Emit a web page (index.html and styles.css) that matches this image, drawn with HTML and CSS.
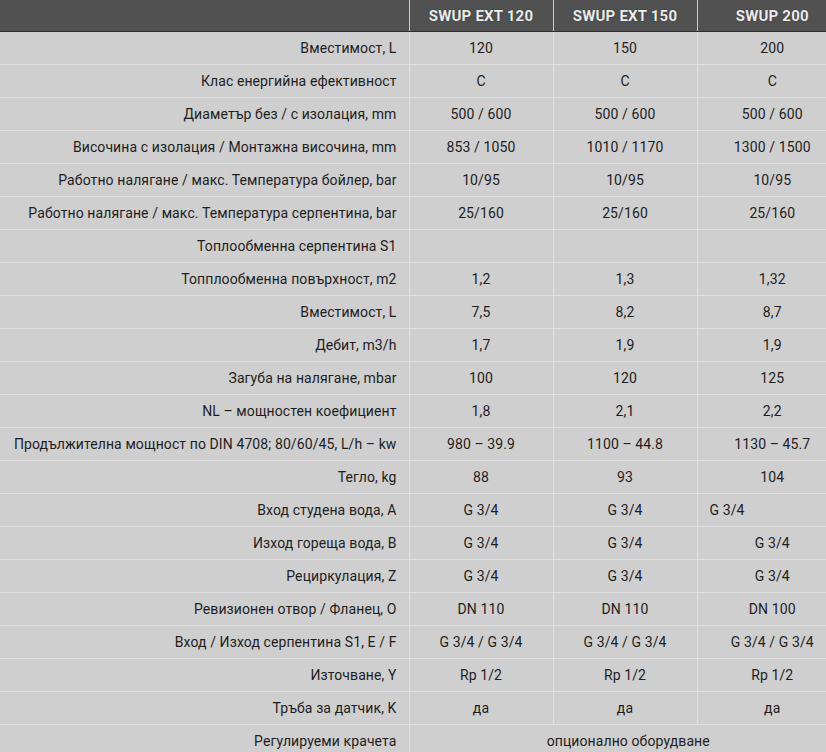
FILE: index.html
```html
<!DOCTYPE html>
<html lang="bg">
<head>
<meta charset="utf-8">
<title>SWUP</title>
<link rel="stylesheet" href="styles.css">
</head>
<body>
<table class="spec">
  <colgroup>
    <col class="c-label"><col class="c-val"><col class="c-val"><col class="c-last">
  </colgroup>
  <thead>
    <tr><th></th><th>SWUP EXT 120</th><th>SWUP EXT 150</th><th>SWUP 200</th></tr>
  </thead>
  <tbody>
    <tr><td>Вместимост, L</td><td>120</td><td>150</td><td>200</td></tr>
    <tr><td>Клас енергийна ефективност</td><td>C</td><td>C</td><td>C</td></tr>
    <tr><td>Диаметър без / с изолация, mm</td><td>500 / 600</td><td>500 / 600</td><td>500 / 600</td></tr>
    <tr><td>Височина с изолация / Монтажна височина, mm</td><td>853 / 1050</td><td>1010 / 1170</td><td>1300 / 1500</td></tr>
    <tr><td>Работно налягане / макс. Температура бойлер, bar</td><td>10/95</td><td>10/95</td><td>10/95</td></tr>
    <tr><td>Работно налягане / макс. Температура серпентина, bar</td><td>25/160</td><td>25/160</td><td>25/160</td></tr>
    <tr><td>Топлообменна серпентина S1</td><td></td><td></td><td></td></tr>
    <tr><td>Топплообменна повърхност, m2</td><td>1,2</td><td>1,3</td><td>1,32</td></tr>
    <tr><td>Вместимост, L</td><td>7,5</td><td>8,2</td><td>8,7</td></tr>
    <tr><td>Дебит, m3/h</td><td>1,7</td><td>1,9</td><td>1,9</td></tr>
    <tr><td>Загуба на налягане, mbar</td><td>100</td><td>120</td><td>125</td></tr>
    <tr><td>NL – мощностен коефициент</td><td>1,8</td><td>2,1</td><td>2,2</td></tr>
    <tr><td>Продължителна мощност по DIN 4708; 80/60/45, L/h – kw</td><td>980 – 39.9</td><td>1100 – 44.8</td><td>1130 – 45.7</td></tr>
    <tr><td>Тегло, kg</td><td>88</td><td>93</td><td>104</td></tr>
    <tr><td>Вход студена вода, A</td><td>G 3/4</td><td>G 3/4</td><td class="left">G 3/4</td></tr>
    <tr><td>Изход гореща вода, B</td><td>G 3/4</td><td>G 3/4</td><td>G 3/4</td></tr>
    <tr><td>Рециркулация, Z</td><td>G 3/4</td><td>G 3/4</td><td>G 3/4</td></tr>
    <tr><td>Ревизионен отвор / Фланец, O</td><td>DN 110</td><td>DN 110</td><td>DN 100</td></tr>
    <tr><td>Вход / Изход серпентина S1, E / F</td><td>G 3/4 / G 3/4</td><td>G 3/4 / G 3/4</td><td>G 3/4 / G 3/4</td></tr>
    <tr><td>Източване, Y</td><td>Rp 1/2</td><td>Rp 1/2</td><td>Rp 1/2</td></tr>
    <tr><td>Тръба за датчик, K</td><td>да</td><td>да</td><td>да</td></tr>
    <tr><td>Регулируеми крачета</td><td colspan="3">опционално оборудване</td></tr>
  </tbody>
</table>
</body>
</html>
```

FILE: styles.css
```css
html, body {
  margin: 0;
  padding: 0;
  background: #cfcfcf;
  overflow: hidden;
}
.spec {
  width: 847px;
  table-layout: fixed;
  border-collapse: collapse;
  font-family: Roboto, "Liberation Sans", sans-serif;
  font-size: 14px;
  letter-spacing: 0.1px;
  color: #1e1e1e;
  background: #cfcfcf;
}
.c-label { width: 409px; }
.c-val { width: 144px; }
.c-last { width: 150px; }
.spec th {
  height: 31px;
  padding: 0;
  background: #515151;
  color: #ececec;
  font-weight: 700;
  font-size: 15px;
  letter-spacing: 0.2px;
  text-align: center;
  border-bottom: 1px solid #2e2e2e;
  border-left: 1px solid #c9c9c9;
  text-shadow: 0 0 1px #222;
}
.spec th:first-child { border-left: none; }
.spec td {
  height: 32px;
  padding: 0 12px;
  text-align: center;
  border-bottom: 1px solid #e1e1e1;
  border-left: 1px solid #e1e1e1;
  white-space: nowrap;
}
.spec td:first-child {
  text-align: right;
  border-left: none;
}
.spec td.left { text-align: left; }
```
